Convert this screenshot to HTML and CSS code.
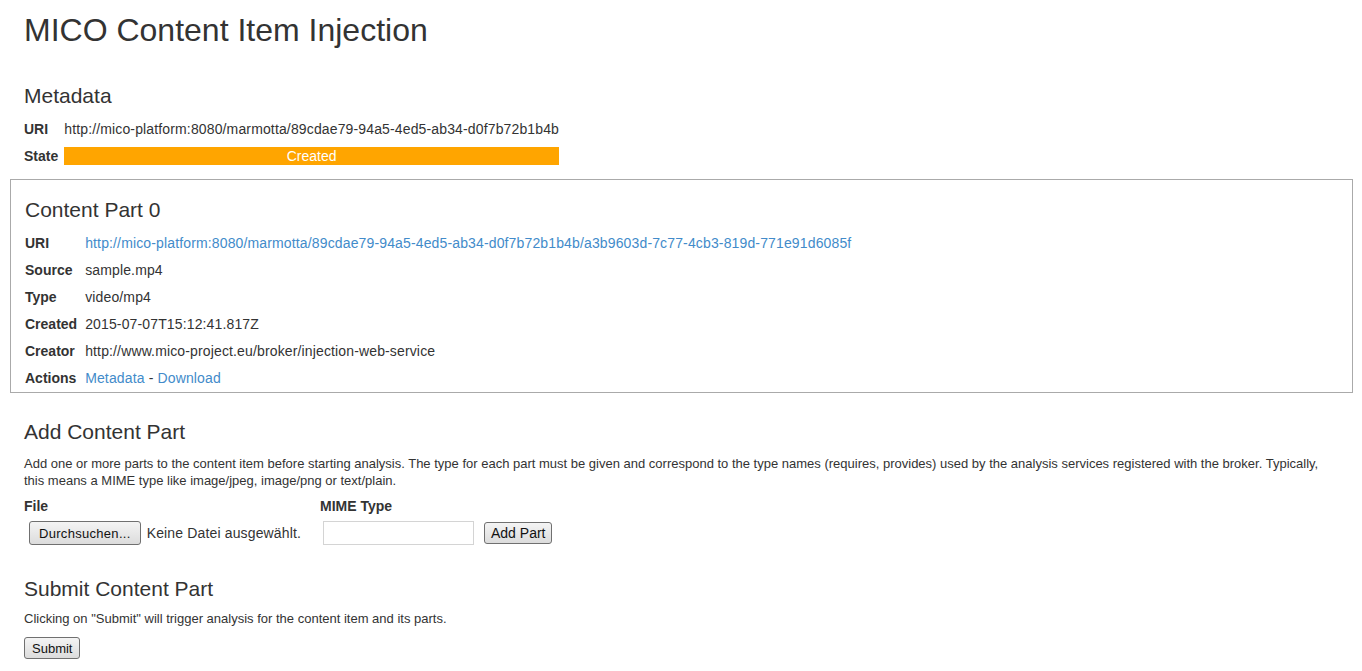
FILE: index.html
```html
<!DOCTYPE html>
<html>
<head>
<title>MICO Content Item Injection</title>
<link rel="stylesheet" href="styles.css">
</head>
<body>

<div class="page">
  <div class="section">
    <h1>MICO Content Item Injection</h1>
  </div>

  <div class="section">
    <h3>Metadata</h3>
    <table class="props">
      <tr>
        <td class="label">URI</td>
        <td>http://mico-platform:8080/marmotta/89cdae79-94a5-4ed5-ab34-d0f7b72b1b4b</td>
      </tr>
      <tr>
        <td class="label">State</td>
        <td><div class="state">Created</div></td>
      </tr>
    </table>
  </div>

  <div class="section part">
    <h3>Content Part 0</h3>
    <table class="props">
      <tr>
        <td class="label">URI</td>
        <td><a href="#">http://mico-platform:8080/marmotta/89cdae79-94a5-4ed5-ab34-d0f7b72b1b4b/a3b9603d-7c77-4cb3-819d-771e91d6085f</a></td>
      </tr>
      <tr>
        <td class="label">Source</td>
        <td>sample.mp4</td>
      </tr>
      <tr>
        <td class="label">Type</td>
        <td>video/mp4</td>
      </tr>
      <tr>
        <td class="label">Created</td>
        <td>2015-07-07T15:12:41.817Z</td>
      </tr>
      <tr>
        <td class="label">Creator</td>
        <td>http://www.mico-project.eu/broker/injection-web-service</td>
      </tr>
      <tr>
        <td class="label">Actions</td>
        <td><a href="#">Metadata</a> - <a href="#">Download</a></td>
      </tr>
    </table>
  </div>

  <div class="section add">
    <h3>Add Content Part</h3>
    <p class="note">Add one or more parts to the content item before starting analysis. The type for each part must be given and correspond to the type names (requires, provides) used by the analysis services registered with the broker. Typically, this means a MIME type like image/jpeg, image/png or text/plain.</p>
    <form class="add-form">
      <div class="field file-field">
        <label>File</label>
        <div class="file-input">
          <button type="button" class="btn browse">Durchsuchen...</button>
          <span>Keine Datei ausgewählt.</span>
        </div>
      </div>
      <div class="field">
        <label>MIME Type</label>
        <div class="mime-row">
          <input type="text" class="mime">
          <button type="button" class="btn add-btn">Add Part</button>
        </div>
      </div>
    </form>
  </div>

  <div class="section submit">
    <h3>Submit Content Part</h3>
    <p class="note">Clicking on "Submit" will trigger analysis for the content item and its parts.</p>
    <button type="button" class="btn submit-btn">Submit</button>
  </div>
</div>

</body>
</html>
```

FILE: styles.css
```css
body {
  font-family: "Liberation Sans", Arial, sans-serif;
  font-size: 14px;
  color: #333;
  margin: 0;
  padding: 0;
}

.page {
  padding: 10px 9px 0 10px;
}

.section {
  padding: 0 14px;
}

h1 {
  font-size: 32px;
  font-weight: normal;
  line-height: 40px;
  margin: 0;
}

h3 {
  font-size: 21px;
  font-weight: normal;
  line-height: 26px;
  margin: 33px 0 6px 0;
}

a {
  color: #428bca;
  text-decoration: none;
}

.props {
  border-collapse: collapse;
  letter-spacing: 0.14px;
}

.props td {
  padding: 0 6px 0 0;
  height: 27px;
  vertical-align: middle;
  white-space: nowrap;
}

.props .label {
  font-weight: bold;
  letter-spacing: 0;
}

.state {
  background-color: #ffa500;
  color: #fff;
  text-align: center;
  height: 18px;
  line-height: 18px;
  letter-spacing: 0;
}

.part {
  border: 1px solid #aaa;
  margin-top: 10px;
  padding-bottom: 1px;
}

.part h3 {
  margin-top: 17px;
}

.part .props td.label {
  padding-right: 8px;
}

.add h3 {
  margin-top: 26px;
}

.note {
  font-size: 13px;
  line-height: 17px;
  margin: 0 0 7px 0;
}

.add .note {
  margin-top: 10px;
}

.add-form {
  display: flex;
}

.field label {
  display: block;
  font-weight: bold;
  line-height: 20px;
  margin-bottom: 5px;
}

.file-field {
  width: 296px;
}

.file-input {
  display: flex;
  align-items: center;
  padding-left: 5px;
}

.file-input span {
  margin-left: 6px;
  letter-spacing: 0.15px;
}

.mime-row {
  display: flex;
  align-items: center;
  padding-left: 3px;
}

.mime {
  width: 145px;
  height: 20px;
  border: 1px solid #d4d4d4;
  padding: 1px 2px;
  font-family: inherit;
  font-size: 13px;
}

.btn {
  font-family: "Liberation Sans", Arial, sans-serif;
  font-size: 13px;
  color: #111;
  background: linear-gradient(#f4f4f4, #dcdcdc);
  border: 1px solid #707070;
  border-radius: 3px;
  padding: 0 7px;
  cursor: pointer;
}

.browse {
  height: 24px;
  padding: 0 9px;
  letter-spacing: 0.3px;
}

.add-btn {
  margin-left: 10px;
  height: 22px;
  font-size: 14px;
  padding: 0 6px;
}

.submit h3 {
  margin-top: 31px;
  margin-bottom: 8px;
}

.submit .note {
  margin-top: 1px;
  margin-bottom: 10px;
}

.submit-btn {
  height: 22px;
  padding: 0 7px;
}
```
